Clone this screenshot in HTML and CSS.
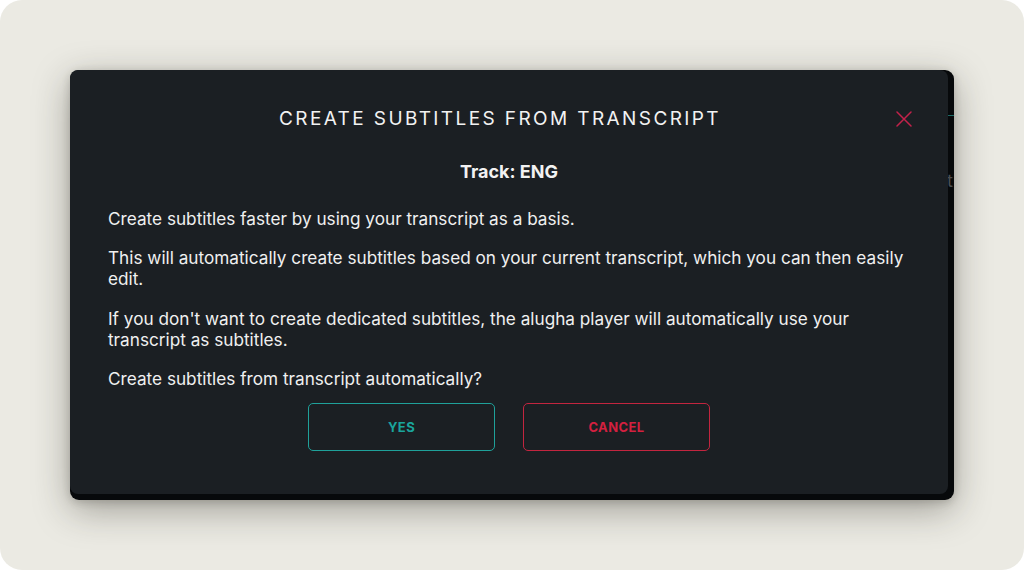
FILE: index.html
```html
<!DOCTYPE html>
<html lang="en">
<head>
<meta charset="utf-8">
<title>Create subtitles from transcript</title>
<link rel="stylesheet" href="styles.css">
</head>
<body>
<div class="stage">
  <div class="frame">
    <span class="peek">t</span>
    <section class="modal">
      <header class="modal-head">
        <h1 class="modal-title">CREATE SUBTITLES FROM TRANSCRIPT</h1>
        <button class="close" aria-label="Close">
          <svg width="16" height="16" viewBox="0 0 16 16"><path d="M1 1 L15 15 M15 1 L1 15" stroke="#c3224b" stroke-width="1.5" fill="none" stroke-linecap="round"/></svg>
        </button>
      </header>
      <p class="track">Track: ENG</p>
      <div class="modal-body">
        <p>Create subtitles faster by using your transcript as a basis.</p>
        <p>This will automatically create subtitles based on your current transcript, which you can then easily edit.</p>
        <p>If you don't want to create dedicated subtitles, the alugha player will automatically use your transcript as subtitles.</p>
        <p>Create subtitles from transcript automatically?</p>
      </div>
      <div class="actions">
        <button class="btn btn-yes">YES</button>
        <button class="btn btn-cancel">CANCEL</button>
      </div>
    </section>
  </div>
</div>
</body>
</html>
```
FILE: styles.css
```css
* { box-sizing: border-box; }
html, body { margin: 0; padding: 0; background: #ffffff; }
body { width: 1024px; height: 570px; overflow: hidden; font-family: Inter, "Noto Sans", "Liberation Sans", sans-serif; }

.stage {
  width: 1024px;
  height: 570px;
  background: #ebeae3;
  border-radius: 22px;
  padding: 70px 0 0 70px;
}

.frame {
  position: relative;
  width: 884px;
  height: 430px;
  border-radius: 9px;
  background:
    linear-gradient(to bottom, transparent 45px, #1d6b66 45px, #1d6b66 46px, transparent 46px),
    #07090b;
  padding: 0 6px 6px 0;
  box-shadow: 0 10px 36px rgba(40, 38, 30, 0.38), 0 2px 8px rgba(40, 38, 30, 0.2);
}

.peek {
  position: absolute;
  left: 877px;
  top: 100px;
  font-size: 18px;
  color: #4a4e52;
}

.modal {
  position: relative;
  width: 878px;
  height: 424px;
  background: #1b1f23;
  border-radius: 8px;
  padding: 37px 38px 0 38px;
  color: #f1f1f1;
  display: flex;
  flex-direction: column;
}

.modal-head {
  display: flex;
  align-items: center;
  justify-content: center;
  position: relative;
  height: 24px;
}

.modal-title {
  margin: 0 18px 0 0;
  font-size: 19px;
  font-weight: 400;
  letter-spacing: 2.4px;
  line-height: 24px;
  color: #f2f2f2;
}

.close {
  position: absolute;
  right: -2px;
  top: 4px;
  width: 16px;
  height: 16px;
  padding: 0;
  border: 0;
  background: none;
  display: flex;
}

.track {
  margin: 30px 0 0 0;
  text-align: center;
  font-weight: 700;
  font-size: 18px;
  line-height: 22px;
  color: #f2f2f2;
}

.modal-body {
  margin-top: 24.5px;
  font-size: 17.2px;
  line-height: 21px;
  color: #f0f0f0;
}

.modal-body p {
  margin: 0 0 18.5px 0;
}

.modal-body p:last-child { margin-bottom: 0; }

.actions {
  margin-top: 14px;
  display: flex;
  justify-content: center;
  gap: 28px;
}

.btn {
  width: 187px;
  height: 48px;
  background: transparent;
  border-radius: 5px;
  font-family: Inter, "Noto Sans", "Liberation Sans", sans-serif;
  font-size: 13px;
  font-weight: 700;
  letter-spacing: 0.4px;
  cursor: pointer;
}

.btn-yes {
  border: 1.5px solid #1fa19a;
  color: #1aa49c;
}

.btn-cancel {
  border: 1.5px solid #c3253f;
  color: #d4203f;
}
```
